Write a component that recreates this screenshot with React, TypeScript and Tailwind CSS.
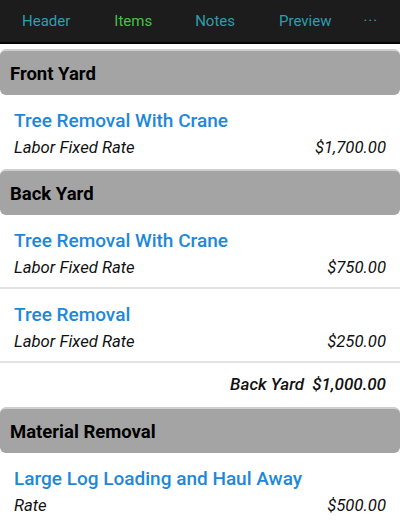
import React from "react";

type Item = { title: string; sub: string; price: string };
type Section = { name: string; items: Item[]; total?: string };

const sections: Section[] = [
  { name: "Front Yard", items: [{ title: "Tree Removal With Crane", sub: "Labor Fixed Rate", price: "$1,700.00" }] },
  {
    name: "Back Yard",
    items: [
      { title: "Tree Removal With Crane", sub: "Labor Fixed Rate", price: "$750.00" },
      { title: "Tree Removal", sub: "Labor Fixed Rate", price: "$250.00" },
    ],
    total: "$1,000.00",
  },
  { name: "Material Removal", items: [{ title: "Large Log Loading and Haul Away", sub: "Rate", price: "$500.00" }] },
];

export default function App() {
  return (
    <div className="w-[400px] h-[528px] overflow-hidden bg-white" style={{ fontFamily: "Roboto, 'Noto Sans', sans-serif" }}>
      <div className="h-[44px] bg-[#1c1c1c] border-b-2 border-[#050505] flex items-center text-[15px] pl-[22px]">
        <span className="text-[#2f9db0]">Header</span>
        <span className="ml-[44px] text-[#47c147]">Items</span>
        <span className="ml-[43px] text-[#2f9db0]">Notes</span>
        <span className="ml-[44px] text-[#2f9db0]">Preview</span>
        <span className="ml-[32px] text-[#2f9db0] tracking-[1px]">···</span>
      </div>
      <div className="pt-[5px]">
        {sections.map((s) => (
          <div key={s.name}>
            <div className="h-[46px] rounded-[6px] bg-[#a4a4a4] border-t-2 border-[#cfcfcf] flex items-center pl-[10px] pt-[3px] text-[18.5px] font-bold text-black">
              {s.name}
            </div>
            {s.items.map((it, i) => (
              <div key={i} className={"h-[74px] px-[14px] pt-[14px] " + (s.total || i < s.items.length - 1 ? "border-b-2 border-[#e3e3e3]" : "")}>
                <div className="text-[19px] leading-[24px] font-medium text-[#1e88d8]">{it.title}</div>
                <div className="mt-[4px] flex justify-between text-[16.7px] leading-[22px] italic text-[#111]">
                  <span>{it.sub}</span>
                  <span>{it.price}</span>
                </div>
              </div>
            ))}
            {s.total && (
              <div className="h-[44px] flex items-center justify-end pr-[14px] pb-[1px] text-[17px] italic font-medium text-[#111]">
                <span>{s.name}</span>
                <span className="ml-[8px]">{s.total}</span>
              </div>
            )}
          </div>
        ))}
      </div>
    </div>
  );
}
